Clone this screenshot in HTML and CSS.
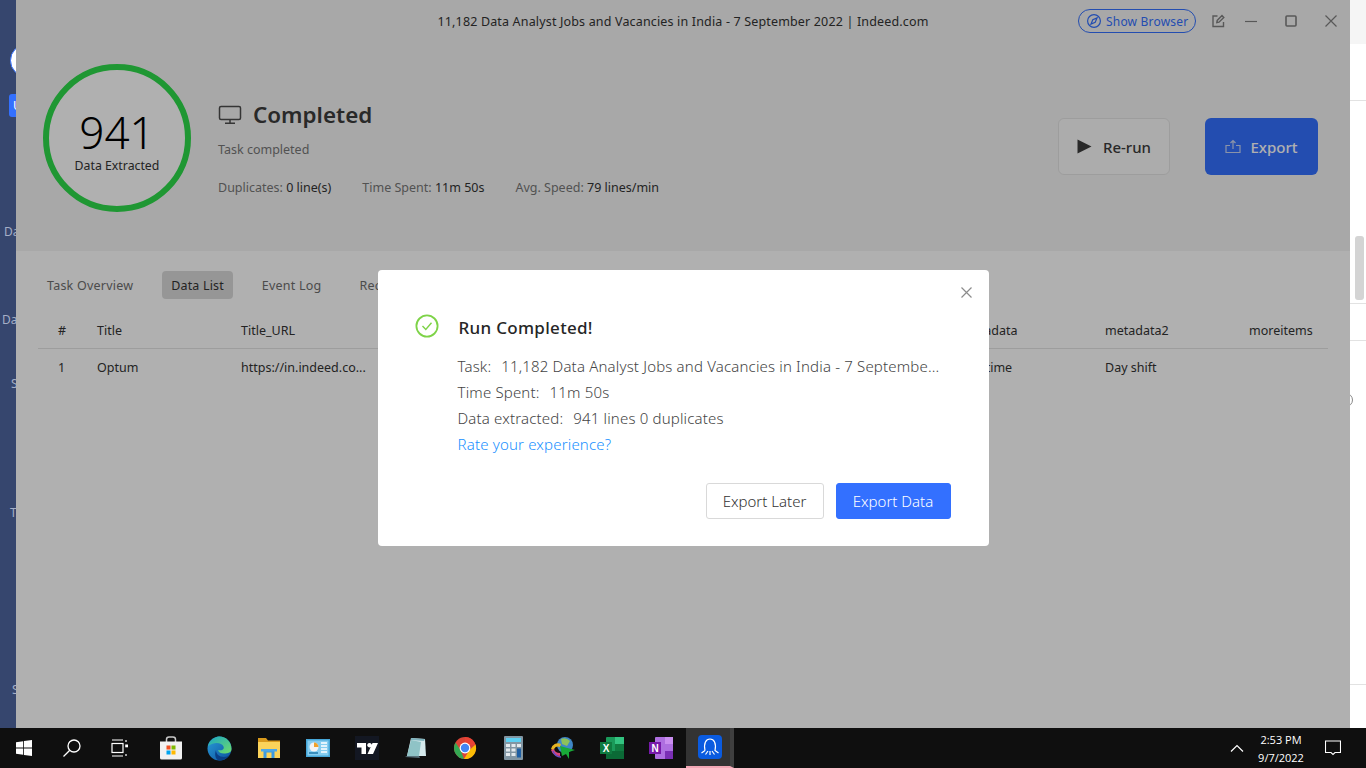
FILE: index.html
```html
<!DOCTYPE html>
<html lang="en">
<head>
    <meta charset="UTF-8">
    <meta name="viewport" content="width=device-width, initial-scale=1.0">
    <title>Run Completed</title>
    <link rel="stylesheet" href="styles.css">
</head>
<body>
    <div class="desktop">
        <!-- what is left visible of the window behind, on the left -->
        <aside class="side">
            <div class="side-avatar"></div>
            <div class="side-btn">U</div>
            <div class="side-label side-da1">Da</div>
            <div class="side-label side-da2">Da</div>
            <div class="side-label side-s1">S</div>
            <div class="side-label side-t">T</div>
            <div class="side-label side-s2">S</div>
        </aside>

        <main class="app">
            <section class="hero">
                <div class="titlebar">
                    <div class="window-title">11,182 Data Analyst Jobs and Vacancies in India - 7 September 2022 | Indeed.com</div>
                    <a class="show-browser">
                        <svg width="18" height="18" viewBox="0 0 18 18" fill="none" stroke="currentColor" stroke-width="1.2"><circle cx="9" cy="9" r="6.4"/><path d="M12 6 10.2 10.2 6 12 7.8 7.8Z"/></svg>
                        Show Browser
                    </a>
                    <svg class="win-icon win-edit" width="16" height="16" viewBox="0 0 16 16" fill="none" stroke="#808080" stroke-width="1.4"><path d="M7.5 3H3v10.5h10.5V9"/><path d="M6.8 9.6 7.2 7.4 12 2.6 13.8 4.4 9 9.2Z"/></svg>
                    <svg class="win-icon win-min" width="14" height="14" viewBox="0 0 14 14" stroke="#808080" stroke-width="1.2"><path d="M1 7.5h12"/></svg>
                    <svg class="win-icon win-max" width="14" height="14" viewBox="0 0 14 14" fill="none" stroke="#808080" stroke-width="1.6"><rect x="2" y="2" width="10" height="10" rx="1"/></svg>
                    <svg class="win-icon win-close" width="14" height="14" viewBox="0 0 14 14" stroke="#808080" stroke-width="1.2"><path d="M1.5 1.5 12.5 12.5M12.5 1.5 1.5 12.5"/></svg>
                </div>
                <div class="summary">
                    <div class="ring">
                        <div class="ring-num">941</div>
                        <div class="ring-label">Data Extracted</div>
                    </div>
                    <div class="info">
                        <div class="status">
                            <svg width="24" height="20" viewBox="0 0 24 20" fill="none" stroke="#4d4d4d" stroke-width="1.5"><rect x="1.5" y="1.5" width="21" height="13" rx="1.5"/><path d="M12 15v3M7 18.2h10"/></svg>
                            Completed
                        </div>
                        <div class="status-sub">Task completed</div>
                        <div class="stats">
                            <span>Duplicates: <b>0 line(s)</b></span>
                            <span>Time Spent: <b>11m 50s</b></span>
                            <span>Avg. Speed: <b>79 lines/min</b></span>
                        </div>
                    </div>
                    <div class="actions">
                        <button class="big-btn rerun">
                            <svg width="15" height="15" viewBox="0 0 15 15"><path d="M0.5 0.5 14.5 7.5 0.5 14.5Z" fill="#3c3c3c"/></svg>
                            Re-run
                        </button>
                        <button class="big-btn export">
                            <svg width="16" height="15" viewBox="0 0 16 15" fill="none" stroke="#c8d6f5" stroke-width="1.2"><path d="M5 6.5H1v7h14v-7h-4M8 10V1.5M5.5 4 8 1.5 10.500 4"/></svg>
                            Export
                        </button>
                    </div>
                </div>
            </section>

            <section class="panel">
                <nav class="tabs">
                    <a class="tab">Task Overview</a>
                    <a class="tab active">Data List</a>
                    <a class="tab">Event Log</a>
                    <a class="tab">Record</a>
                </nav>
                <table class="data">
                    <thead>
                        <tr><th class="num">#</th><th>Title</th><th>Title_URL</th><th>Company</th><th>Location</th><th>Rating</th><th>Salary</th><th>metadata</th><th>metadata2</th><th class="last">moreitems</th></tr>
                    </thead>
                    <tbody>
                        <tr><td class="num">1</td><td>Optum</td><td>https://in.indeed.co...</td><td></td><td></td><td></td><td></td><td>Full-time</td><td>Day shift</td><td class="last"></td></tr>
                    </tbody>
                </table>
            </section>

            <div class="mask">
                <div class="dialog">
                    <svg class="dialog-close" width="13" height="13" viewBox="0 0 13 13" stroke="#8c8c8c" stroke-width="1.2"><path d="M1.500 1.500 11.500 11.500M11.500 1.500 1.500 11.500"/></svg>
                    <div class="dialog-head">
                        <svg class="dialog-check" width="24" height="24" viewBox="0 0 24 24" fill="none" stroke="#7ed348" stroke-width="1.8"><circle cx="12" cy="12" r="10.600"/><path d="M7.500 12 10.800 15.500 16.500 8.800" stroke-width="1.4"/></svg>
                        <h2>Run Completed!</h2>
                    </div>
                    <div class="dialog-body">
                        <p><span class="key">Task:</span>11,182 Data Analyst Jobs and Vacancies in India - 7 Septembe...</p>
                        <p><span class="key">Time Spent:</span>11m 50s</p>
                        <p><span class="key">Data extracted:</span>941 lines 0 duplicates</p>
                        <p><a class="rate">Rate your experience?</a></p>
                    </div>
                    <div class="dialog-foot">
                        <button class="btn">Export Later</button>
                        <button class="btn primary">Export Data</button>
                    </div>
                </div>
            </div>
        </main>

        <!-- window behind, right edge -->
        <aside class="behind">
            <div class="behind-top"></div>
            <div class="behind-row behind-r1"></div>
            <div class="behind-row behind-r2"></div>
            <div class="behind-row behind-r3"></div>
            <div class="behind-row behind-r4"><span class="behind-circle"></span></div>
            <div class="behind-scroll"></div>
        </aside>
    </div>

    <footer class="taskbar">
        <div class="tb-item">
            <svg width="18" height="18" viewBox="0 0 18 18" fill="#fff"><path d="M1 3.200 8.200 2.200V8.500H1ZM9 2 17 1V8.500H9ZM1 9.500H8.200V15.800L1 14.800ZM9 9.500H17V17L9 16Z"/></svg>
        </div>
        <div class="tb-item">
            <svg width="20" height="20" viewBox="0 0 20 20" fill="none" stroke="#fff" stroke-width="1.300"><circle cx="12" cy="8" r="6"/><path d="M7.800 12.300 1.500 18.500"/></svg>
        </div>
        <div class="tb-item">
            <svg width="18" height="18" viewBox="0 0 18 18" fill="none" stroke="#fff" stroke-width="1.200"><path d="M1 1H12M1 17H12"/><rect x="1" y="4.500" width="11" height="9"/><path d="M15 1V3M15 15V17"/><rect x="14.200" y="5.500" width="2.800" height="2.800" fill="#fff" stroke="none"/></svg>
        </div>
        <div class="tb-apps">
            <div class="tb-item">
                <svg width="24" height="24" viewBox="0 0 24 24"><path d="M7.500 6V3.500Q7.500 1 10 1H14Q16.500 1 16.500 3.500V6" fill="none" stroke="#c9c9c9" stroke-width="1.500"/><path d="M1 5.500H23V22Q23 23.500 21.500 23.500H2.500Q1 23.500 1 22Z" fill="#f1f1f1"/><rect x="7.500" y="9.500" width="4" height="4" fill="#f25022"/><rect x="12.500" y="9.500" width="4" height="4" fill="#7fba00"/><rect x="7.500" y="14.500" width="4" height="4" fill="#00a4ef"/><rect x="12.500" y="14.500" width="4" height="4" fill="#ffb900"/></svg>
            </div>
            <div class="tb-item">
                <svg width="25" height="25" viewBox="0 0 25 25"><defs><linearGradient id="edgeA" x1="0" y1="0" x2="1" y2="1"><stop offset="0" stop-color="#2a9ed8"/><stop offset="1" stop-color="#0c4f9e"/></linearGradient><linearGradient id="edgeB" x1="0" y1="0" x2="1" y2="1"><stop offset="0" stop-color="#1aa6c4"/><stop offset="1" stop-color="#6fdc6a"/></linearGradient></defs><circle cx="12.500" cy="12.500" r="12" fill="url(#edgeA)"/><path d="M1 10C3 3 9 .5 12.500 .5 19 .5 24.500 6 24.500 13 24.500 16.500 21 17.500 17 17.500 14 17.500 11.500 16.500 11 14 16 15 17.500 12.500 16.500 10.500 15 7 8 5 1 10Z" fill="url(#edgeB)"/><path d="M9 14C9 18 12 21 17 21 19.500 21 21 20 22 19 20 23 16 24.500 12.500 24.500 9 24.500 7 19 9 14Z" fill="#0a3f86"/></svg>
            </div>
            <div class="tb-item">
                <svg width="24" height="22" viewBox="0 0 24 22"><path d="M1 1H9L11 3.500H23V21H1Z" fill="#d99a1c"/><rect x="1" y="5" width="22" height="16" fill="#fbd35a"/><path d="M6.500 21V12.500H17.500V21H14.500V15.500H9.500V21Z" fill="#3d9ae0"/><rect x="4" y="12" width="16" height="2.500" fill="#4ca7e8"/></svg>
            </div>
            <div class="tb-item">
                <svg width="24" height="18" viewBox="0 0 24 18"><rect width="24" height="18" fill="#46a7d9"/><rect x="1.500" y="1.500" width="21" height="15" fill="#86cdf0"/><circle cx="8" cy="8" r="4.500" fill="#f4f4f4"/><path d="M8 8V3.500A4.500 4.500 0 0 1 12.500 8Z" fill="#f1a22b"/><path d="M15 4H21M15 7H21M15 10H21M15 13H21" stroke="#fff" stroke-width="1.300"/><path d="M3 14H12" stroke="#1f78ac" stroke-width="1.500"/></svg>
            </div>
            <div class="tb-item">
                <svg width="24" height="24" viewBox="0 0 24 24"><rect width="24" height="24" fill="#131722"/><path d="M2 7H11V18H6.500V11.500H2ZM14.500 11.500A2.300 2.300 0 1 1 14.510 11.500ZM17.500 7H23L18 18H12.500Z" fill="#fff"/></svg>
            </div>
            <div class="tb-item">
                <svg width="24" height="24" viewBox="0 0 24 24"><path d="M7 2 21 3 22 20 3 20Z" fill="#d5e9ec"/><path d="M7 2 21 3 20 5 7 4Z" fill="#7fb3bd"/><path d="M7 4 17 6 15 20 3 20Z" fill="#8fc3c6"/><path d="M3 20 15 20 16 22 1 21Z" fill="#57707a"/></svg>
            </div>
            <div class="tb-item">
                <svg width="24" height="24" viewBox="0 0 24 24"><circle cx="12" cy="12" r="11" fill="#db4437"/><path d="M12 1A11 11 0 0 1 22.500 9H12Z" fill="#ea4335"/><path d="M22.500 8.500A11 11 0 0 1 11 23L16.500 14Z" fill="#fbbc05"/><path d="M11 23A11 11 0 0 1 2.500 6.500L8 15Z" fill="#34a853"/><circle cx="12" cy="12" r="5.400" fill="#fff"/><circle cx="12" cy="12" r="4.200" fill="#4285f4"/></svg>
            </div>
            <div class="tb-item">
                <svg width="19" height="24" viewBox="0 0 19 24"><rect width="19" height="24" rx="1" fill="#8296a3"/><rect x="2" y="2" width="15" height="4" fill="#5ed0f2"/><g fill="#e3e9ed"><rect x="2" y="8" width="4" height="3"/><rect x="7.500" y="8" width="4" height="3"/><rect x="2" y="12.500" width="4" height="3"/><rect x="7.500" y="12.500" width="4" height="3"/><rect x="2" y="17" width="4" height="3"/><rect x="7.500" y="17" width="4" height="3"/><rect x="13" y="8" width="4" height="3"/></g><rect x="13" y="12.500" width="4" height="9" fill="#1f5fa3"/></svg>
            </div>
            <div class="tb-item">
                <svg width="26" height="24" viewBox="0 0 26 24"><circle cx="15" cy="9" r="8" fill="#3f86c6"/><path d="M11 3Q16 1 20 5L17 10 12 8Z" fill="#8ec15a"/><path d="M1 13A7 7 0 0 1 11 8L10 11A4 4 0 0 0 4 15Z" fill="#e6b422"/><path d="M1 14Q3 20 10 20L10 17Q5 17 4 13Z" fill="#d8457a"/><path d="M3 15Q5 21 11 21" fill="none" stroke="#6b4bc4" stroke-width="1.500"/><path d="M10 10 25 14 19 16 19 23 16 18 12 20Z" fill="#18a838"/></svg>
            </div>
            <div class="tb-item">
                <svg width="24" height="22" viewBox="0 0 24 22"><rect x="6" width="18" height="22" rx="1" fill="#1a9a5a"/><rect x="15" width="9" height="7" fill="#33c481"/><rect x="15" y="7" width="9" height="7" fill="#107c41"/><rect x="6" y="14" width="18" height="8" fill="#0b6a36"/><rect y="5" width="12" height="12" fill="#0f7b40"/><text x="6" y="14.500" class="tile-letter">X</text></svg>
            </div>
            <div class="tb-item">
                <svg width="24" height="24" viewBox="0 0 24 24"><rect x="6" y="1" width="18" height="22" rx="1" fill="#ae6fe0"/><rect x="16" y="1" width="8" height="7" fill="#ca8ef0"/><rect x="16" y="15" width="8" height="8" fill="#7b2fb5"/><rect y="6" width="12" height="12" fill="#7719aa"/><text x="6" y="15.500" class="tile-letter">N</text></svg>
            </div>
            <div class="tb-item tb-active">
                <svg width="24" height="24" viewBox="0 0 24 24"><rect width="24" height="24" rx="4" fill="#0a5be0"/><path d="M7 15.500C5.500 8 8 4 12 4 16 4 18.500 8 17 15.500L20.500 18M7 15.500 3.500 18M10 16 7.500 19.500M14 16 16.500 19.500M12 16V20" fill="none" stroke="#fff" stroke-width="1.200"/></svg>
            </div>
        </div>
        <div class="tray">
            <svg width="14" height="8" viewBox="0 0 14 8" fill="none" stroke="#fff" stroke-width="1.200"><path d="M1 7.500 7 1.500 13 7.500"/></svg>
            <div class="clock"><div>2:53 PM</div><div>9/7/2022</div></div>
            <svg class="notify" width="16" height="16" viewBox="0 0 16 16" fill="none" stroke="#fff" stroke-width="1.100"><path d="M.5 1H15.500V12.500H10L8 14.500 6 12.500H.5Z"/></svg>
        </div>
    </footer>
</body>
</html>
```

FILE: styles.css
```css
* {
    box-sizing: border-box;
}
body {
    margin: 0;
    width: 1366px;
    height: 768px;
    overflow: hidden;
    font-family: "Noto Sans", Arial, sans-serif;
    color: #444;
    background-color: #fff;
}
.desktop {
    display: flex;
    height: 728px;
}

/* left sliver */
.side {
    width: 16px;
    flex: none;
    display: flex;
    flex-direction: column;
    overflow: hidden;
    background-color: #36466e;
    color: #a5afc6;
    font-size: 12px;
}
.side-avatar {
    width: 33px;
    height: 33px;
    flex: none;
    margin: 44px 0 0 10px;
    border-radius: 50%;
    background-color: #fff;
    border: 1px solid #3370ff;
}
.side-btn {
    width: 40px;
    height: 23px;
    flex: none;
    margin: 17px 0 0 9px;
    padding-left: 4px;
    border-radius: 3px;
    background-color: #3370ff;
    color: #fff;
    line-height: 23px;
}
.side-label {
    height: 20px;
    line-height: 20px;
    flex: none;
}
.side-da1 { margin: 105px 0 0 4px; }
.side-da2 { margin: 68px 0 0 2px; }
.side-s1 { margin: 44px 0 0 11px; }
.side-t { margin: 109px 0 0 10px; }
.side-s2 { margin: 157px 0 0 12px; }

/* main window */
.app {
    position: relative;
    width: 1334px;
    flex: none;
    display: flex;
    flex-direction: column;
    background-color: #fff;
}
.hero {
    height: 251px;
    flex: none;
    background-color: #f4f4f4;
}
.titlebar {
    height: 42px;
    display: flex;
    align-items: center;
    position: relative;
}
.window-title {
    position: absolute;
    left: 0;
    right: 0;
    text-align: center;
    font-size: 12.5px;
    letter-spacing: 0.16px;
    color: #333;
}
.show-browser {
    position: relative;
    display: flex;
    align-items: center;
    gap: 3px;
    margin-left: 1062px;
    width: 118px;
    height: 24px;
    padding-left: 6px;
    border: 1px solid #3370ff;
    border-radius: 12px;
    color: #3370ff;
    font-size: 12px;
    letter-spacing: 0.2px;
    white-space: nowrap;
}
.win-icon {
    position: relative;
    flex: none;
}
.win-edit { margin-left: 14px; }
.win-min { margin-left: 18px; }
.win-max { margin-left: 26px; }
.win-close { margin-left: 26px; }

.summary {
    display: flex;
    align-items: flex-start;
    padding: 22px 32px 0 27px;
}
.ring {
    width: 148px;
    height: 148px;
    flex: none;
    border: 6px solid #2ddb4a;
    border-radius: 50%;
    background-color: #fff;
    display: flex;
    flex-direction: column;
    align-items: center;
    justify-content: center;
    color: #000;
}
.ring-num {
    font-size: 44px;
    line-height: 50px;
    font-weight: 300;
    margin-top: 4px;
}
.ring-label {
    margin-top: 1px;
    font-size: 12.3px;
    line-height: 16px;
    color: #333;
}
.info {
    margin: 36px 0 0 27px;
}
.status {
    display: flex;
    align-items: center;
    gap: 11px;
    height: 30px;
    font-size: 22.4px;
    line-height: 28px;
    font-weight: 600;
    color: #3c3c3c;
}
.status-sub {
    margin-top: 11px;
    font-size: 12.5px;
    line-height: 18px;
    color: #777;
}
.stats {
    display: flex;
    gap: 31px;
    margin-top: 20px;
    font-size: 12.5px;
    line-height: 18px;
    color: #777;
}
.stats b {
    font-weight: 400;
    color: #333;
}
.actions {
    display: flex;
    gap: 35px;
    margin: 54px 0 0 auto;
}
.big-btn {
    height: 57px;
    display: flex;
    align-items: center;
    justify-content: center;
    gap: 11px;
    border-radius: 6px;
    font-family: inherit;
    font-size: 15px;
    font-weight: 500;
}
.rerun {
    width: 112px;
    border: 1px solid #e4e4e4;
    background-color: #fafafa;
    color: #3c3c3c;
}
.export {
    width: 113px;
    border: none;
    gap: 9px;
    background-color: #3370ff;
    color: #fff;
}

.panel {
    flex: 1;
    padding: 20px 22px 0;
}
.tabs {
    display: flex;
    gap: 20px;
}
.tab {
    height: 28px;
    padding: 0 9px;
    border-radius: 4px;
    font-size: 12.5px;
    line-height: 29px;
    color: #6e6e6e;
    letter-spacing: 0.22px;
}
.tab.active {
    background-color: #dadada;
    color: #333;
    letter-spacing: 0.15px;
}
.data {
    width: 1290px;
    margin-top: 13px;
    border-collapse: collapse;
    table-layout: fixed;
    font-size: 12.500px;
    color: #333;
}
.data th, .data td {
    width: 144px;
    padding: 1px 0 0;
    text-align: left;
    font-weight: 400;
    white-space: nowrap;
}
.data th {
    height: 36px;
    border-bottom: 1px solid #e4e4e4;
}
.data td {
    height: 37px;
}
.data .num {
    width: 59px;
    padding-left: 20px;
}
.data .last {
    width: 79px;
}

/* dim layer with the dialog on top */
.mask {
    position: absolute;
    top: 0;
    left: 0;
    right: 0;
    bottom: 0;
    display: flex;
    justify-content: center;
    padding-top: 270px;
    background-color: rgba(0, 0, 0, 0.31);
}
.dialog {
    position: relative;
    width: 611px;
    height: 276px;
    padding: 44px 38px 0;
    border-radius: 4px;
    background-color: #fff;
}
.dialog-close {
    position: absolute;
    top: 16px;
    right: 16px;
}
.dialog-head {
    display: flex;
    align-items: center;
    gap: 19px;
    height: 26px;
}
.dialog-check {
    margin: -2px 1px 0 -1px;
}
.dialog-head h2 {
    margin: 0;
    font-size: 17px;
    font-weight: 500;
    letter-spacing: 0.3px;
    color: #262626;
}
.dialog-body {
    margin: 13px 0 0 42px;
    font-size: 15px;
    line-height: 26px;
    font-weight: 300;
    letter-spacing: 0.17px;
    color: #444;
}
.dialog-body p {
    margin: 0;
    white-space: nowrap;
}
.key {
    margin-right: 10px;
}
.rate {
    color: #1890ff;
}
.dialog-foot {
    display: flex;
    justify-content: flex-end;
    gap: 12px;
    margin-top: 26px;
}
.btn {
    width: 118px;
    height: 36px;
    border: 1px solid #d9d9d9;
    border-radius: 3px;
    background-color: #fff;
    color: #333;
    font-family: inherit;
    font-size: 15px;
    font-weight: 300;
}
.btn.primary {
    width: 115px;
    border-color: #3370ff;
    background-color: #3370ff;
    color: #fff;
}

/* right sliver */
.behind {
    position: relative;
    flex: 1;
    overflow: hidden;
}
.behind-top {
    height: 44px;
    background-color: #f5f5f5;
}
.behind-row {
    border-bottom: 1px solid #e2e2e2;
}
.behind-r1 { height: 57px; }
.behind-r2 { height: 203px; }
.behind-r3 { height: 37px; }
.behind-r4 {
    height: 344px;
    display: flow-root;
}
.behind-circle {
    display: block;
    width: 14px;
    height: 14px;
    margin: 52px 0 0 -11px;
    border: 1px solid #888;
    border-radius: 50%;
}
.behind-scroll {
    position: absolute;
    top: 236px;
    left: 5px;
    width: 9px;
    height: 64px;
    border-radius: 3px;
    background-color: #d4d4d4;
}

/* windows taskbar */
.taskbar {
    display: flex;
    align-items: center;
    height: 40px;
    background-color: #0f0f0f;
    color: #fff;
}
.tb-item {
    width: 48px;
    height: 40px;
    flex: none;
    display: flex;
    align-items: center;
    justify-content: center;
}
.tb-apps {
    display: flex;
    margin-left: 2px;
}
.tb-apps .tb-item {
    width: 49px;
}
.tb-apps .tb-active {
    width: 48px;
    margin-left: 1px;
    background-color: #333;
    border-bottom: 2px solid #f2a7b5;
    border-right: 4px solid #3f3f3f;
    padding-left: 4px;
}
.tile-letter {
    font-family: "Liberation Sans", Arial, sans-serif;
    font-size: 10px;
    font-weight: 700;
    fill: #fff;
    text-anchor: middle;
}
.tray {
    display: flex;
    align-items: center;
    margin-left: auto;
    padding-right: 25px;
}
.clock {
    width: 62px;
    margin-left: 6px;
    padding-top: 2px;
    text-align: center;
    font-size: 11px;
    line-height: 18px;
    font-family: "Open Sans", Arial, sans-serif;
}
.notify {
    margin-left: 13px;
}
```
